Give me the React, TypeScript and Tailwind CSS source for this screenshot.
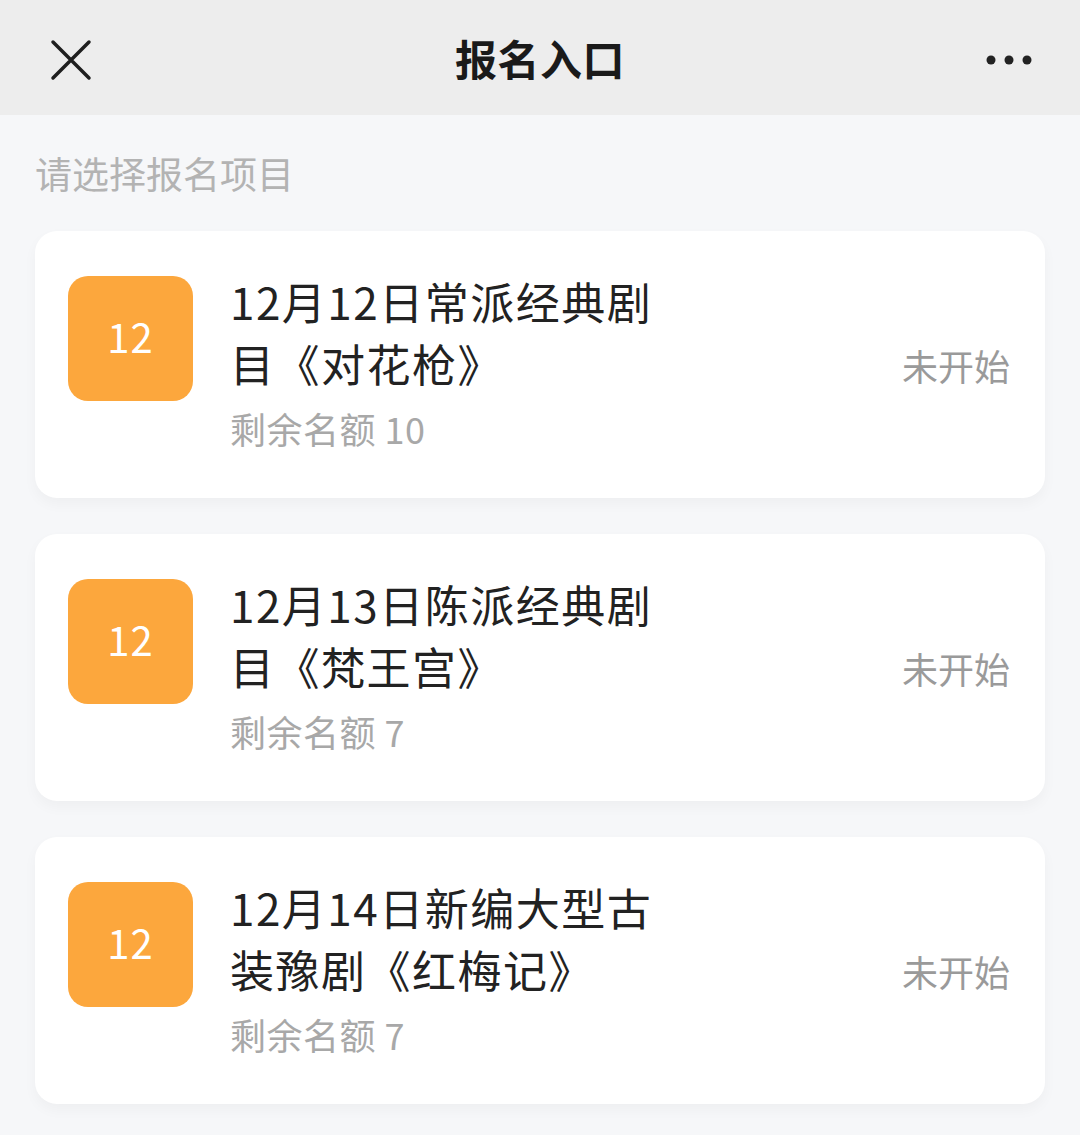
import React from 'react';

const font = { fontFamily: '"Noto Sans CJK SC", "Noto Sans", sans-serif' };

const items = [
  { day: '12', title: '12月12日常派经典剧目《对花枪》', left: 10 },
  { day: '12', title: '12月13日陈派经典剧目《梵王宫》', left: 7 },
  { day: '12', title: '12月14日新编大型古装豫剧《红梅记》', left: 7 },
];

function Header() {
  return (
    <div className="relative flex h-[115px] items-center justify-center bg-[#ededed]">
      <div className="absolute left-[50px] top-[39px]">
        <svg width="42" height="42" viewBox="0 0 42 42">
          <path d="M3 3 L39 39 M39 3 L3 39" stroke="#1f1f1f" strokeWidth="3.5" strokeLinecap="round" />
        </svg>
      </div>
      <h1 className="text-[42px] font-bold leading-none tracking-[0.5px] text-[#1a1a1a]">报名入口</h1>
      <div className="absolute right-[48px] top-[55px]">
        <svg width="46" height="10" viewBox="0 0 46 10">
          <circle cx="5" cy="5" r="4.5" fill="#222" />
          <circle cx="23" cy="5" r="4.5" fill="#222" />
          <circle cx="41" cy="5" r="4.5" fill="#222" />
        </svg>
      </div>
    </div>
  );
}

function EntryCard({ day, title, left }: { day: string; title: string; left: number }) {
  return (
    <div className="flex h-[267px] items-start rounded-[22px] bg-white pl-[33px] pr-[35px] pt-[39px] shadow-[0_6px_14px_rgba(0,0,0,0.035)]">
      <div className="mt-[6px] flex h-[125px] w-[125px] shrink-0 items-center justify-center rounded-[20px] bg-[#fca73d] pb-[5px]">
        <span className="text-[40px] leading-none tracking-[1px] text-white">{day}</span>
      </div>
      <div className="ml-[37px] w-[440px]">
        <div className="text-[44px] leading-[62px] tracking-[1.5px] text-[#222]">{title}</div>
        <div className="mt-[9px] text-[36px] leading-[50px] tracking-[0.5px] text-[#a8a8a8]">剩余名额 {left}</div>
      </div>
      <div className="-mt-[38px] ml-auto self-center text-[36px] leading-none text-[#9a9a9a]">未开始</div>
    </div>
  );
}

export default function App() {
  return (
    <div className="min-h-[1135px] w-[1080px] bg-[#f6f7f9]" style={font}>
      <Header />
      <div className="px-[35px]">
        <div className="pt-[38px] text-[37px] leading-[40px] text-[#b3b3b3]">请选择报名项目</div>
        <div className="mt-[38px] flex flex-col gap-[36px]">
          {items.map((it, i) => (
            <EntryCard key={i} {...it} />
          ))}
        </div>
      </div>
    </div>
  );
}
